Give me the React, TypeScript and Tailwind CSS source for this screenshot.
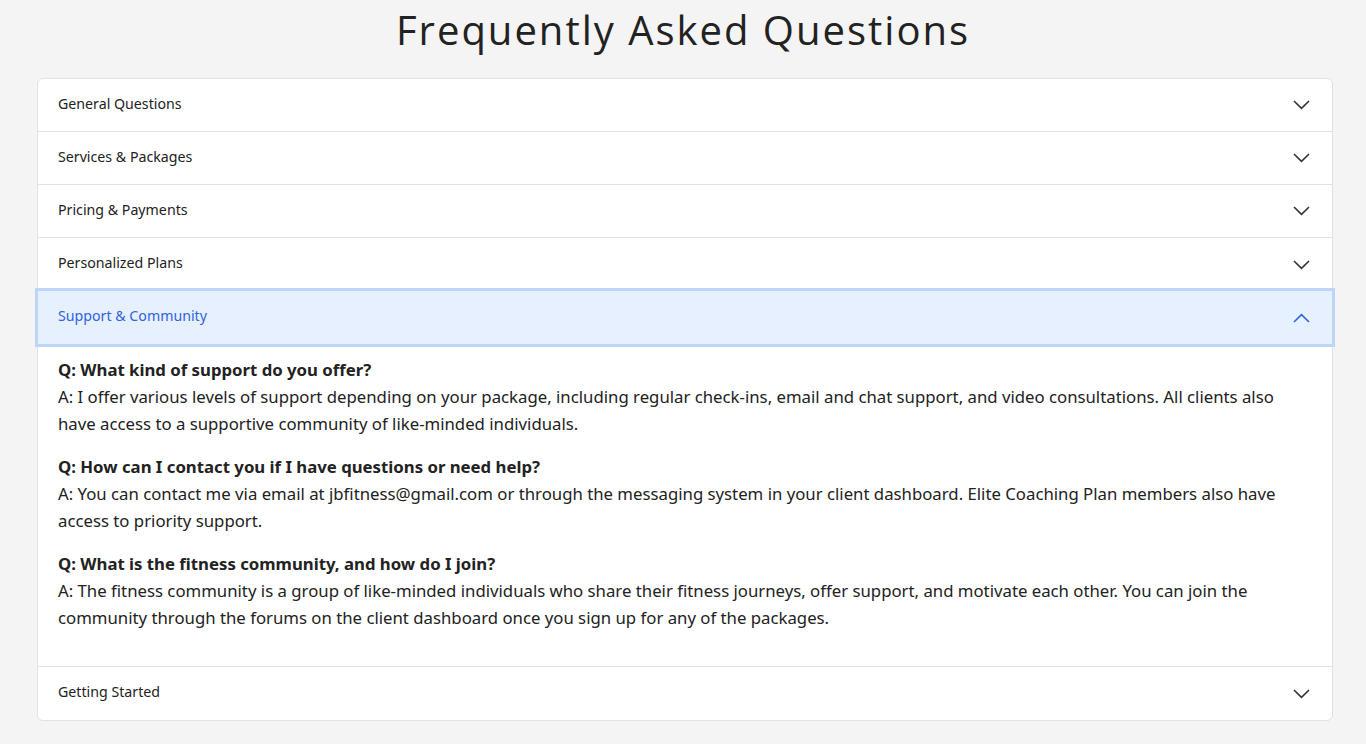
import React from "react";

const Chevron = ({ up = false, className = "" }: { up?: boolean; className?: string }) => (
  <svg width="17" height="10" viewBox="0 0 17 10" fill="none" className={className}>
    {up ? (
      <path d="M1 9L8.5 1.7L16 9" stroke="currentColor" strokeWidth="1.6" strokeLinejoin="miter" />
    ) : (
      <path d="M1 1L8.5 8.3L16 1" stroke="currentColor" strokeWidth="1.6" strokeLinejoin="miter" />
    )}
  </svg>
);

const Row = ({ title, last = false }: { title: string; last?: boolean }) => (
  <div
    className={`flex h-[53px] items-center justify-between pl-5 pr-[22px] ${
      last ? "" : "border-b border-[#e2e2e6]"
    }`}
  >
    <span className="pb-[3px] text-[14.2px] text-[#222]">{title}</span>
    <Chevron className="text-[#333]" />
  </div>
);

const qa = [
  {
    q: "Q: What kind of support do you offer?",
    a: "A: I offer various levels of support depending on your package, including regular check-ins, email and chat support, and video consultations. All clients also have access to a supportive community of like-minded individuals.",
  },
  {
    q: "Q: How can I contact you if I have questions or need help?",
    a: "A: You can contact me via email at jbfitness@gmail.com or through the messaging system in your client dashboard. Elite Coaching Plan members also have access to priority support.",
  },
  {
    q: "Q: What is the fitness community, and how do I join?",
    a: "A: The fitness community is a group of like-minded individuals who share their fitness journeys, offer support, and motivate each other. You can join the community through the forums on the client dashboard once you sign up for any of the packages.",
  },
];

export default function App() {
  return (
    <div className="min-h-[744px] bg-[#f4f4f4] pb-6" style={{ fontFamily: '"Noto Sans", "Open Sans", sans-serif' }}>
      <h1
        className="pt-[6px] text-center text-[40px] leading-[48px] tracking-[2px] text-[#222]"
        style={{ fontFamily: '"Open Sans", sans-serif' }}
      >
        Frequently Asked Questions
      </h1>
      <div className="ml-[37px] mt-[24px] w-[1296px] rounded-md border border-[#e2e2e6] bg-white">
        <Row title="General Questions" />
        <Row title="Services & Packages" />
        <Row title="Pricing & Payments" />
        <Row title="Personalized Plans" last />
        <div className="relative z-10 -mx-[3px] -mt-[3px] flex h-[59px] items-center justify-between border-[3px] border-[#bcd5f8] bg-[#e7f0fe] pl-[20px] pr-[22px]">
          <span className="pb-[3px] text-[14.2px] text-[#2f63e0]">Support &amp; Community</span>
          <Chevron up className="text-[#2f63e0]" />
        </div>
        <div className="border-b border-[#e2e2e6] px-5 pb-[35px] pt-[9px] text-[16.75px] leading-[27px] text-[#222]">
          {qa.map((item, i) => (
            <div key={i} className={i > 0 ? "mt-[16px]" : ""}>
              <p className="font-bold">{item.q}</p>
              <p>{item.a}</p>
            </div>
          ))}
        </div>
        <Row title="Getting Started" last />
      </div>
    </div>
  );
}
